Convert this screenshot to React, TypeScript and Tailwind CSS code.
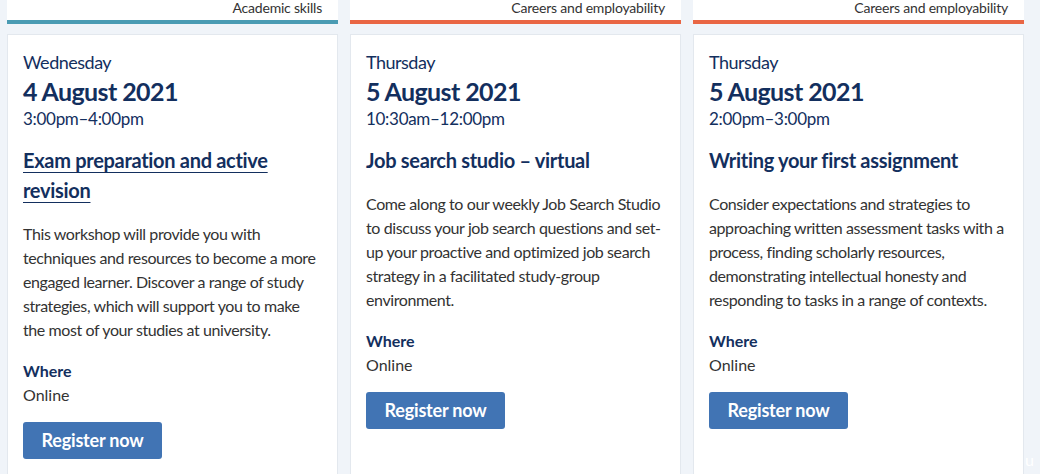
import React from 'react'

type EventItem = {
  category: string
  accent: string
  day: string
  date: string
  time: string
  title: string[]
  link?: boolean
  body: string[]
}

const events: EventItem[] = [
  {
    category: 'Academic skills',
    accent: 'border-[#4a9bb3]',
    day: 'Wednesday',
    date: '4 August 2021',
    time: '3:00pm–4:00pm',
    title: ['Exam preparation and active', 'revision'],
    link: true,
    body: [
      'This workshop will provide you with',
      'techniques and resources to become a more',
      'engaged learner. Discover a range of study',
      'strategies, which will support you to make',
      'the most of your studies at university.'
    ]
  },
  {
    category: 'Careers and employability',
    accent: 'border-[#e96644]',
    day: 'Thursday',
    date: '5 August 2021',
    time: '10:30am–12:00pm',
    title: ['Job search studio – virtual'],
    body: [
      'Come along to our weekly Job Search Studio',
      'to discuss your job search questions and set-',
      'up your proactive and optimized job search',
      'strategy in a facilitated study-group',
      'environment.'
    ]
  },
  {
    category: 'Careers and employability',
    accent: 'border-[#e96644]',
    day: 'Thursday',
    date: '5 August 2021',
    time: '2:00pm–3:00pm',
    title: ['Writing your first assignment'],
    body: [
      'Consider expectations and strategies to',
      'approaching written assessment tasks with a',
      'process, finding scholarly resources,',
      'demonstrating intellectual honesty and',
      'responding to tasks in a range of contexts.'
    ]
  }
]

function EventCard({ ev }: { ev: EventItem }) {
  return (
    <div className="flex flex-col">
      <div className={`h-6 bg-white border-b-4 ${ev.accent} flex items-start justify-end pr-4`}>
        <span className="text-[14px] leading-[16px] tracking-[-0.2px] text-[#333]">{ev.category}</span>
      </div>
      <div className="mt-2.5 bg-white border border-[#e3e8ee] px-[15px] pt-[14px] pb-8 h-[460px]">
        <div className="text-[18px] leading-[26px] tracking-[-0.5px] text-[#132f5e]">{ev.day}</div>
        <div className="text-[25px] leading-[32px] font-bold tracking-[-0.6px] text-[#132f5e]">{ev.date}</div>
        <div className="text-[17px] leading-[24px] tracking-[-0.3px] text-[#132f5e]">{ev.time}</div>
        <h3
          className={`mt-[14px] text-[20px] leading-[30px] font-bold tracking-[-0.3px] text-[#132f5e] ${
            ev.link ? 'underline decoration-1 underline-offset-[4px]' : ''
          }`}
        >
          {ev.title.map((t, i) => (
            <div key={i}>{t}</div>
          ))}
        </h3>
        <p className="mt-[17px] text-[16px] leading-[24px] tracking-[-0.4px] text-[#333] whitespace-nowrap">
          {ev.body.map((l, i) => (
            <span key={i} className="block">
              {l}
            </span>
          ))}
        </p>
        <div className="mt-[17px] text-[16px] leading-[24px] font-bold text-[#132f5e]">Where</div>
        <div className="text-[16px] leading-[24px] text-[#333]">Online</div>
        <button className="mt-[15px] h-[37px] w-[139px] rounded-[3px] bg-[#4174b4] text-white text-[18px] font-bold tracking-[-0.2px]">
          Register now
        </button>
      </div>
    </div>
  )
}

export default function App() {
  return (
    <div
      className="relative w-[1040px] h-[474px] overflow-hidden bg-[#f0f4f9]"
      style={{ fontFamily: 'Lato, "Noto Sans", sans-serif' }}
    >
      <div className="grid grid-cols-[331px_331px_331px] gap-3 pl-[7px]">
        {events.map((ev, i) => (
          <EventCard key={i} ev={ev} />
        ))}
      </div>
      <span className="absolute right-[6px] bottom-[2px] text-[16px] text-white">u</span>
    </div>
  )
}
